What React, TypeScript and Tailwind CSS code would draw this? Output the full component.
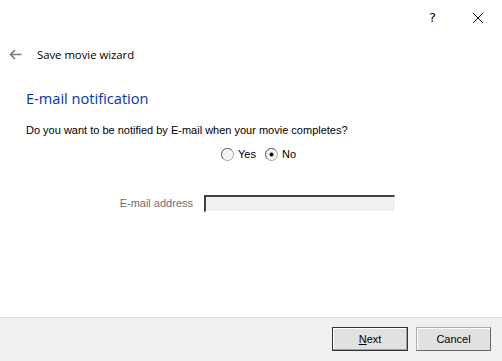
import React, { useState } from "react";

const Radio = ({ checked, onClick }: { checked: boolean; onClick: () => void }) => (
  <svg width="13" height="13" viewBox="0 0 13 13" onClick={onClick}>
    <circle cx="6.5" cy="6.5" r="6" fill="#ffffff" stroke="#a0a0a0" />
    <path d="M2.2 10.8A6 6 0 0 1 10.8 2.2" fill="none" stroke="#696969" />
    <circle cx="6.5" cy="6.5" r="4.6" fill="#f4f4f4" />
    {checked && <circle cx="6.5" cy="6.5" r="2" fill="#000000" />}
  </svg>
);

const App = () => {
  const [notify, setNotify] = useState(false);

  return (
    <div className="w-[502px] h-[361px] bg-white flex flex-col font-['Open_Sans',sans-serif] text-black overflow-hidden">
      {/* title bar */}
      <div className="h-[32px] flex justify-end items-center">
        <div className="w-[45px] text-center text-[13px] font-['DejaVu_Sans',sans-serif] mt-1">?</div>
        <div className="w-[45px] flex justify-center mt-1 mr-[2px]">
          <svg width="12" height="12" viewBox="0 0 12 12">
            <path d="M1 1L11 11M11 1L1 11" stroke="#111" strokeWidth="1" />
          </svg>
        </div>
      </div>

      {/* header */}
      <div className="h-[44px] flex items-center pl-[9px]">
        <svg width="13" height="11" viewBox="0 0 13 11">
          <path d="M6 1L1.5 5.5L6 10M1.5 5.5H12.5" fill="none" stroke="#7a7a7a" strokeWidth="1.6" />
        </svg>
        <span className="ml-[15px] text-[11.3px] mt-[2px]">Save movie wizard</span>
      </div>

      <div className="flex-1 flex flex-col pl-[26px]">
        <div className="text-[14.6px] text-[#0033bc] mt-[11px] leading-[22px]">E-mail notification</div>

        <div className="mt-[15px] text-[11px] font-['Liberation_Sans',sans-serif] leading-[13px]">
          Do you want to be notified by E-mail when your movie completes?
        </div>

        <div className="mt-[9px] ml-[195px] flex items-center text-[11px] font-['Liberation_Sans',sans-serif]">
          <label className="flex items-center gap-[4px]">
            <Radio checked={notify} onClick={() => setNotify(true)} />
            <span>Yes</span>
          </label>
          <label className="flex items-center gap-[4px] ml-[9px]">
            <Radio checked={!notify} onClick={() => setNotify(false)} />
            <span>No</span>
          </label>
        </div>

        <div className="mt-[32px] flex items-center">
          <span className="w-[178px] text-right pr-[11px] text-[11px] text-[#6d6d6d] font-['Liberation_Sans',sans-serif]">
            E-mail address
          </span>
          <input
            disabled={!notify}
            className="w-[191px] h-[17px] bg-[#f0f0f0] border-t-2 border-l-2 border-t-[#404040] border-l-[#404040] border-r border-b border-r-[#f0f0f0] border-b-[#ffffff] outline-none"
          />
        </div>
      </div>

      {/* footer */}
      <div className="h-[44px] bg-[#f0f0f0] border-t border-[#dfdfdf] flex items-center justify-end gap-[8px] pr-[11px] pb-[1px] font-['Liberation_Sans',sans-serif] text-[11px]">
        <button className="w-[76px] h-[24px] bg-[#e1e1e1] border border-[#333333] shadow-[inset_-1px_-1px_0_#a0a0a0,inset_1px_1px_0_#ffffff]">
          <u>N</u>ext
        </button>
        <button className="w-[75px] h-[24px] bg-[#e1e1e1] border border-[#adadad] border-r-[#696969] border-b-[#696969] shadow-[inset_1px_1px_0_#ffffff]">
          Cancel
        </button>
      </div>
    </div>
  );
};

export default App;
